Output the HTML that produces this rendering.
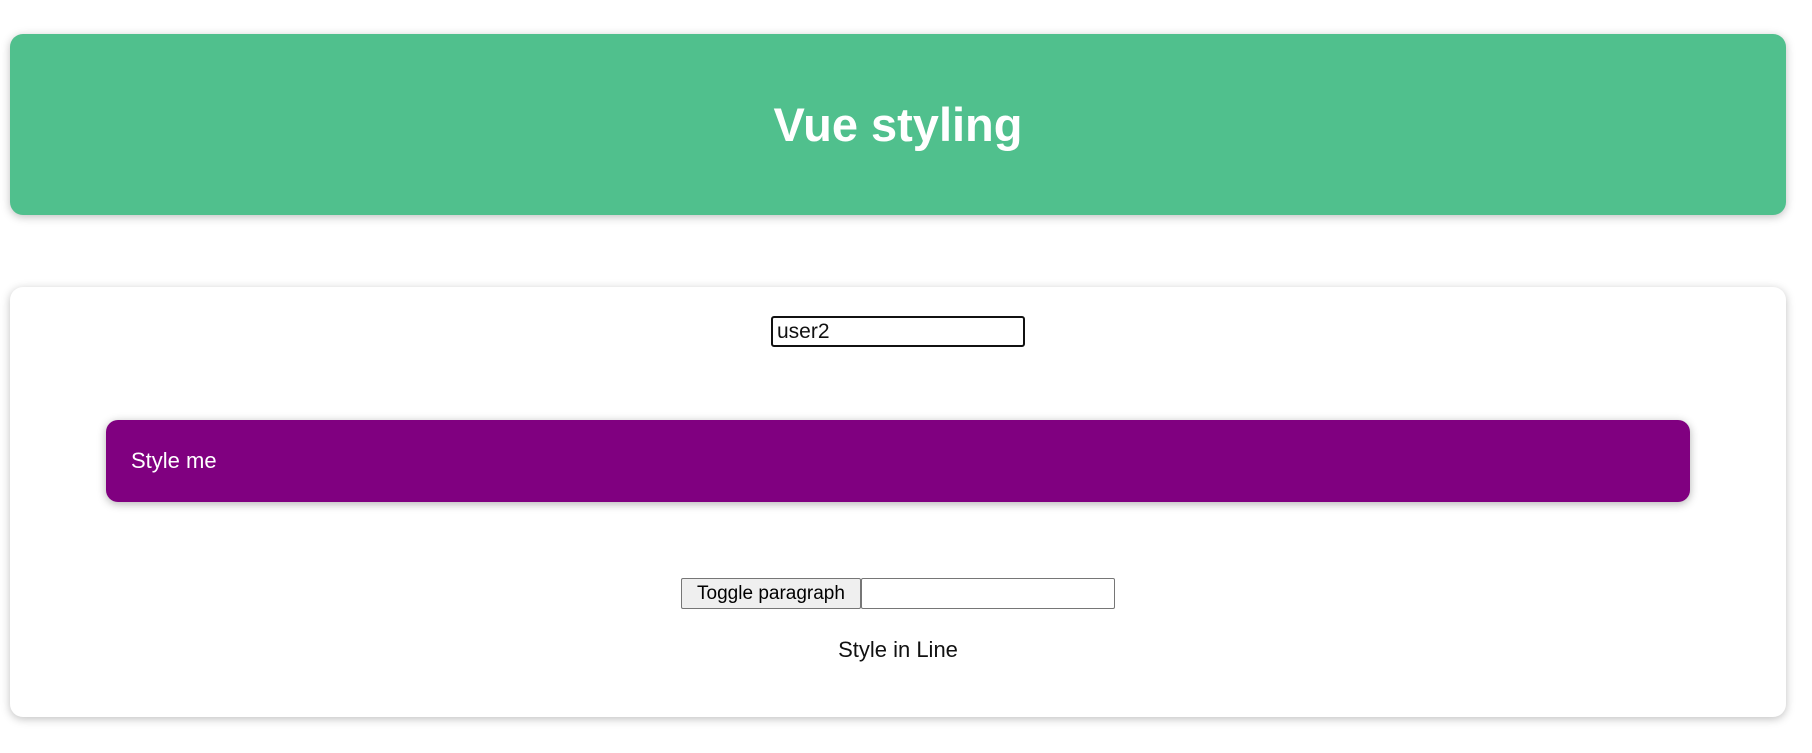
<!DOCTYPE html>
<html><head><meta charset="utf-8"><style>
body{margin:0;width:1812px;height:753px;background:#fff;font-family:"Liberation Sans",sans-serif;position:relative;overflow:hidden}
.hdr{position:absolute;left:10px;top:34px;width:1776px;height:181px;background:#50c08d;border-radius:13px;box-shadow:0 2px 9px rgba(0,0,0,.25);color:#fff;text-align:center;font-weight:bold;font-size:47px;line-height:181px}
.card{position:absolute;left:10px;top:287px;width:1776px;height:430px;background:#fff;border-radius:13px;box-shadow:0 2px 9px rgba(0,0,0,.25)}
.in1{position:absolute;left:771px;top:316px;width:246px;height:27px;border:2px solid #111;border-radius:3px;font-size:21px;line-height:27px;padding-left:4px;box-sizing:content-box;color:#111}
.purple{position:absolute;left:106px;top:420px;width:1584px;height:82px;background:#800080;border-radius:12px;box-shadow:0 2px 9px rgba(0,0,0,.3);color:#fff;font-size:22px;line-height:82px;padding-left:25px;box-sizing:border-box}
.btn{position:absolute;left:681px;top:578px;width:180px;height:31px;border:1px solid #767676;background:#efefef;border-radius:2px;box-sizing:border-box;font-size:19px;line-height:29px;text-align:center;color:#000}
.in2{position:absolute;left:861px;top:578px;width:254px;height:31px;border:1px solid #767676;box-sizing:border-box;border-radius:2px}
.sil{position:absolute;left:10px;width:1776px;top:637px;text-align:center;font-size:22px;color:#111}
</style></head><body>
<div class="hdr">Vue styling</div>
<div class="card"></div>
<div class="in1">user2</div>
<div class="purple">Style me</div>
<div class="btn">Toggle paragraph</div>
<div class="in2"></div>
<div class="sil">Style in Line</div>
</body></html>
